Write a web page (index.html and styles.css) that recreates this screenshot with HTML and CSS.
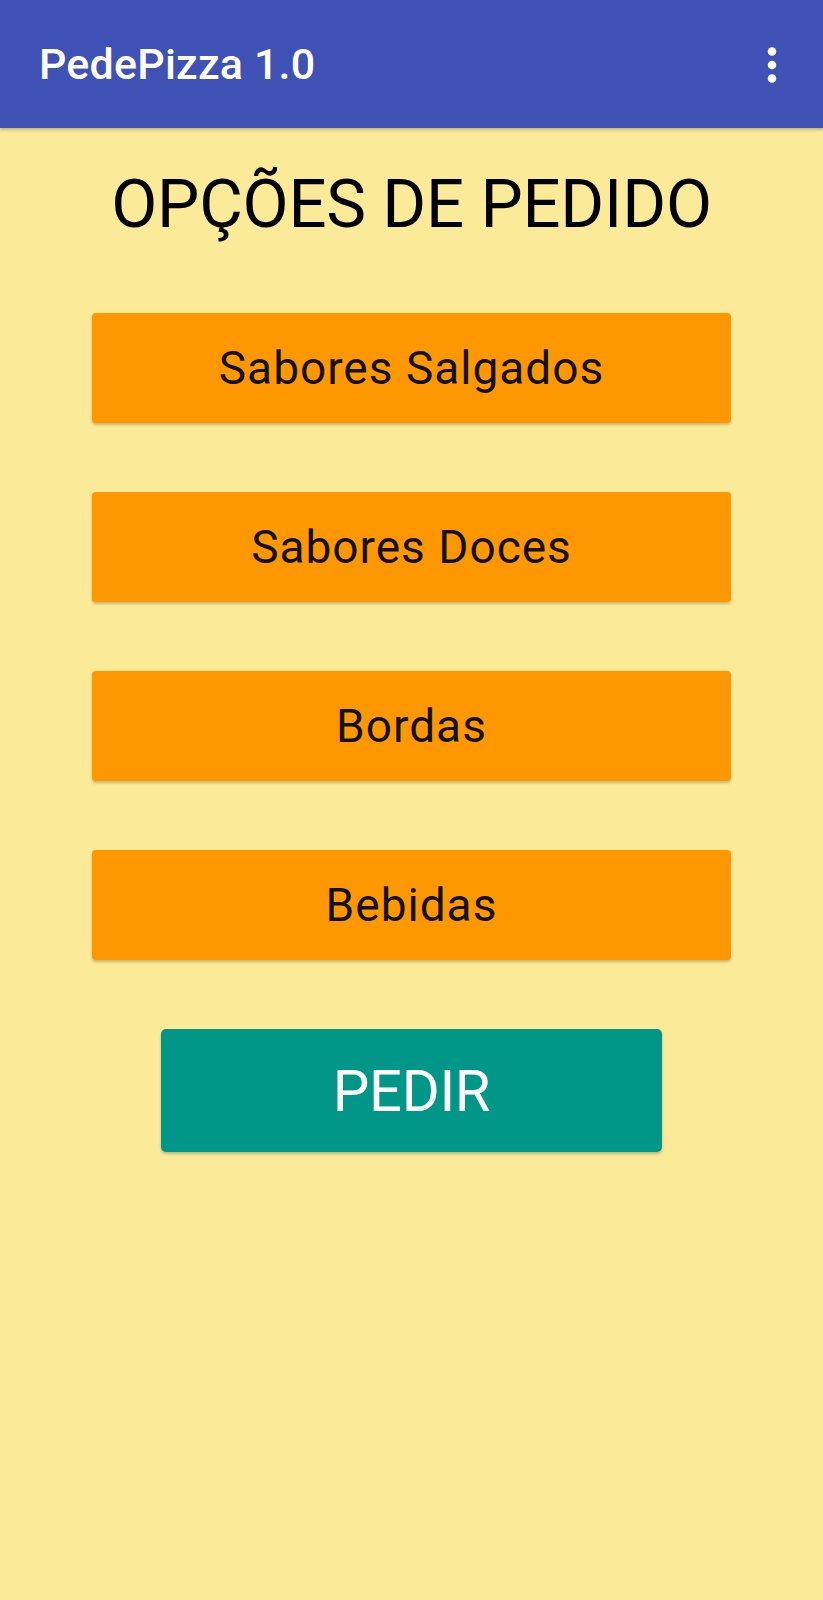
FILE: index.html
```html
<!DOCTYPE html>
<html lang="pt">
<head>
<meta charset="utf-8">
<title>PedePizza 1.0</title>
<link rel="stylesheet" href="styles.css">
</head>
<body>
<header class="appbar">
  <h1 class="appbar-title">PedePizza 1.0</h1>
  <button class="menu-btn" aria-label="Mais opções">
    <svg width="12" height="40" viewBox="0 0 12 40">
      <circle cx="6" cy="6.5" r="4.3" fill="#fff"/>
      <circle cx="6" cy="20" r="4.3" fill="#fff"/>
      <circle cx="6" cy="33.5" r="4.3" fill="#fff"/>
    </svg>
  </button>
</header>
<main class="content">
  <h2 class="heading">OPÇÕES DE PEDIDO</h2>
  <div class="options">
    <button class="option">Sabores Salgados</button>
    <button class="option">Sabores Doces</button>
    <button class="option">Bordas</button>
    <button class="option">Bebidas</button>
  </div>
  <button class="order">PEDIR</button>
</main>
</body>
</html>
```
FILE: styles.css
```css
html, body {
  margin: 0;
  padding: 0;
}
body {
  background: #fbea97;
  font-family: Roboto, "Noto Sans", sans-serif;
  min-height: 1600px;
}
.appbar {
  height: 128px;
  background: #3f51b5;
  display: flex;
  align-items: center;
  justify-content: space-between;
  padding: 0 45px 0 39px;
  box-sizing: border-box;
  box-shadow: 0 2px 3px rgba(0, 0, 0, 0.22);
  position: relative;
}
.appbar-title {
  margin: 0;
  color: #fff;
  font-size: 43px;
  font-weight: 500;
  line-height: 1;
  letter-spacing: 0.2px;
}
.menu-btn {
  background: none;
  border: 0;
  padding: 0;
  display: flex;
  align-items: center;
  margin-top: 2px;
}
.content {
  display: flex;
  flex-direction: column;
  align-items: center;
}
.heading {
  margin: 43px 0 0;
  font-size: 67px;
  font-weight: 400;
  line-height: 67px;
  color: #000;
  letter-spacing: -0.2px;
}
.options {
  margin-top: 75px;
  display: flex;
  flex-direction: column;
  gap: 69px;
}
.option {
  width: 639px;
  height: 110px;
  background: #ff9800;
  border: 0;
  border-radius: 4px;
  box-shadow: 0 2px 3px rgba(0, 0, 0, 0.22);
  font-family: Roboto, "Noto Sans", sans-serif;
  font-size: 46px;
  letter-spacing: 1px;
  color: #111;
  padding: 0;
}
.order {
  margin-top: 69px;
  width: 501px;
  height: 123px;
  background: #009688;
  border: 0;
  border-radius: 5px;
  box-shadow: 0 2px 3px rgba(0, 0, 0, 0.22);
  font-family: Roboto, "Noto Sans", sans-serif;
  font-size: 58px;
  letter-spacing: -0.3px;
  color: #fff;
  padding: 0;
}
```
